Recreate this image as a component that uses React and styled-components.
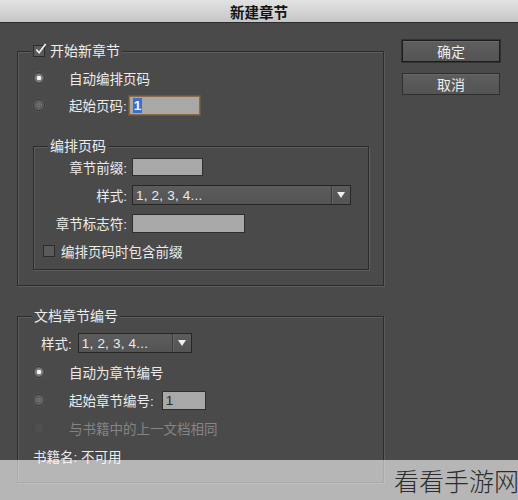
import React from "react";
import styled, { createGlobalStyle } from "styled-components";

const Global = createGlobalStyle`
  html, body { margin: 0; padding: 0; background: #4a4a4a; }
  body { font-family: "Liberation Sans", "Noto Sans CJK SC", sans-serif; }
`;

const Window = styled.div`
  position: relative;
  width: 518px;
  height: 500px;
  background: #4a4a4a;
  overflow: hidden;
  display: flex;
  flex-direction: column;
  color: #ebebeb;
  font-size: 13.5px;
`;

const TitleBar = styled.div`
  height: 22px;
  border-bottom: 1px solid #2c2c2c;
  background: linear-gradient(#e2e2e2, #c6c6c6);
  display: flex;
  align-items: center;
  justify-content: center;
  color: #141414;
  font-size: 14.5px;
  font-weight: 700;
`;

const Body = styled.div`
  display: flex;
  align-items: flex-start;
  padding-left: 17px;
`;

const MainColumn = styled.div`
  width: 367px;
  display: flex;
  flex-direction: column;
`;

const SideColumn = styled.div`
  margin-left: 18px;
  margin-top: 17px;
  display: flex;
  flex-direction: column;
  gap: 11px;
`;

const Button = styled.div`
  width: 96px;
  height: 20px;
  border: 1px solid ${(p) => (p.$primary ? "#1c1c1c" : "#2e2e2e")};
  box-shadow: ${(p) =>
    p.$primary ? "0 0 0 1px #333, inset 0 1px 0 #6a6a6a" : "inset 0 1px 0 #666"};
  background: linear-gradient(#5e5e5e, #545454);
  display: flex;
  align-items: center;
  justify-content: center;
  color: #ececec;
  font-size: 14px;
`;

const GroupBox = styled.div`
  margin-top: ${(p) => p.$top}px;
  margin-left: ${(p) => p.$left || 0}px;
  width: ${(p) => p.$width}px;
  border: 1px solid #2b2b2b;
  box-shadow: inset 1px 1px 0 #5d5d5d, 1px 1px 0 #5d5d5d;
  padding-bottom: ${(p) => p.$bottom}px;
  display: flex;
  flex-direction: column;
  box-sizing: border-box;
`;

const Legend = styled.div`
  align-self: flex-start;
  margin: -8px 0 0 ${(p) => p.$indent}px;
  height: 14px;
  line-height: 14px;
  padding: 0 2px;
  background: #4a4a4a;
  display: flex;
  align-items: center;
  gap: 5px;
  color: #ececec;
  font-size: 14px;
`;

const Row = styled.div`
  height: 20px;
  margin-top: ${(p) => p.$top}px;
  padding-left: ${(p) => p.$pad || 0}px;
  display: flex;
  align-items: center;
  color: ${(p) => (p.$disabled ? "#858585" : "#ebebeb")};
`;

const Radio = styled.span`
  width: 12px;
  height: 12px;
  border-radius: 50%;
  flex: none;
  margin-right: 24px;
  box-sizing: border-box;
  border: 1px solid ${(p) => (p.$disabled ? "#474747" : "#383838")};
  background: ${(p) =>
    p.$checked
      ? "radial-gradient(circle, #f4f4f4 0 2px, #7a7a7a 2.6px 3.6px, #666 4.2px)"
      : p.$disabled
      ? "#4f4f4f"
      : "radial-gradient(circle, #6a6a6a 0 2.5px, #585858 3px 3.6px, #676767 4.2px)"};
  box-shadow: ${(p) => (p.$disabled ? "none" : "0 0 0 1px #545454")};
`;

const Box = styled.span`
  width: 12px;
  height: 12px;
  flex: none;
  box-sizing: border-box;
  border: 1px solid #2c2c2c;
  background: #5a5a5a;
  display: flex;
  align-items: center;
  justify-content: center;
  overflow: visible;
`;

const Label = styled.span`
  width: ${(p) => (p.$width ? `${p.$width}px` : "auto")};
  text-align: ${(p) => (p.$right ? "right" : "left")};
  margin-left: ${(p) => p.$lead || 0}px;
  margin-right: ${(p) => p.$gap || 0}px;
  flex: none;
  white-space: nowrap;
`;

const Field = styled.span`
  width: ${(p) => p.$width}px;
  height: ${(p) => p.$height || 18}px;
  box-sizing: border-box;
  border: 1px solid ${(p) => (p.$focus ? "#8a6a47" : "#2e2e2e")};
  box-shadow: ${(p) => (p.$focus ? "0 0 0 1px #6b5640" : "none")};
  background: #a8a8a8;
  display: flex;
  align-items: center;
  padding-left: 3px;
  color: #2a2a2a;
  font-size: 13.5px;
`;

const Selected = styled.span`
  background: #3c6fcd;
  color: #f4f4f4;
  padding: 0 1px;
  line-height: 15px;
  font-weight: 700;
`;

const Select = styled.span`
  width: ${(p) => p.$width}px;
  height: 20px;
  box-sizing: border-box;
  border: 1px solid #262626;
  background: linear-gradient(#5c5c5c, #545454);
  display: flex;
  align-items: stretch;
  color: #ebebeb;
  font-size: 13.5px;
`;

const SelectText = styled.span`
  flex: 1;
  display: flex;
  align-items: center;
  padding-left: 3px;
  letter-spacing: 0.2px;
`;

const SelectArrow = styled.span`
  width: 18px;
  border-left: 1px solid #3a3a3a;
  box-shadow: inset 1px 0 0 #666;
  display: flex;
  align-items: center;
  justify-content: center;
`;

const Shade = styled.div`
  position: absolute;
  left: 0;
  right: 0;
  bottom: 0;
  height: 40px;
  background: rgba(255, 255, 255, 0.6);
  display: flex;
  justify-content: flex-end;
  align-items: flex-start;
`;

const Mark = styled.span`
  margin-top: 5px;
  margin-right: -1px;
  font-family: "Noto Sans CJK SC", sans-serif;
  font-size: 25px;
  line-height: 30px;
  color: #2c2c2c;
  font-weight: 300;
`;

const Check = () => (
  <svg width="14" height="14" viewBox="0 0 14 14" style={{ margin: "-4px -3px 0 0" }}>
    <path d="M2.5 7.5 L5.5 11 L12.5 1.5" fill="none" stroke="#f2f2f2" strokeWidth="1.8" />
  </svg>
);

const Arrow = () => (
  <svg width="8" height="6" viewBox="0 0 8 6">
    <path d="M0 0 H8 L4 6 Z" fill="#f0f0f0" />
  </svg>
);

const StyleSelect = ({ width }) => (
  <Select $width={width}>
    <SelectText>1, 2, 3, 4...</SelectText>
    <SelectArrow>
      <Arrow />
    </SelectArrow>
  </Select>
);

export default function App() {
  return (
    <Window>
      <Global />
      <TitleBar>新建章节</TitleBar>
      <Body>
        <MainColumn>
          <GroupBox $top={28} $width={367} $bottom={15}>
            <Legend $indent={13}>
              <Box>
                <Check />
              </Box>
              开始新章节
            </Legend>
            <Row $top={10} $pad={15}>
              <Radio $checked />
              <Label>自动编排页码</Label>
            </Row>
            <Row $top={7} $pad={15}>
              <Radio />
              <Label $gap={2}>起始页码:</Label>
              <Field $width={71} $height={19} $focus>
                <Selected>1</Selected>
              </Field>
            </Row>

            <GroupBox $top={31} $left={15} $width={336} $bottom={8}>
              <Legend $indent={14}>编排页码</Legend>
              <Row $top={4}>
                <Label $width={93} $right $gap={5}>章节前缀:</Label>
                <Field $width={71} />
              </Row>
              <Row $top={8}>
                <Label $width={93} $right $gap={5}>样式:</Label>
                <StyleSelect width={219} />
              </Row>
              <Row $top={8}>
                <Label $width={93} $right $gap={5}>章节标志符:</Label>
                <Field $width={113} $height={19} />
              </Row>
              <Row $top={8} $pad={9}>
                <Box />
                <Label $lead={6}>编排页码时包含前缀</Label>
              </Row>
            </GroupBox>
          </GroupBox>

          <GroupBox $top={30} $width={367} $bottom={16}>
            <Legend $indent={14}>文档章节编号</Legend>
            <Row $top={10} $pad={23}>
              <Label $gap={6}>样式:</Label>
              <StyleSelect width={114} />
            </Row>
            <Row $top={9} $pad={15}>
              <Radio $checked />
              <Label>自动为章节编号</Label>
            </Row>
            <Row $top={8} $pad={15}>
              <Radio />
              <Label $gap={8}>起始章节编号:</Label>
              <Field $width={44} $height={19}>1</Field>
            </Row>
            <Row $top={8} $pad={15} $disabled>
              <Radio $disabled />
              <Label>与书籍中的上一文档相同</Label>
            </Row>
            <Row $top={8} $pad={15}>
              <Label>书籍名: 不可用</Label>
            </Row>
          </GroupBox>
        </MainColumn>

        <SideColumn>
          <Button $primary>确定</Button>
          <Button>取消</Button>
        </SideColumn>
      </Body>
      <Shade>
        <Mark>看看手游网</Mark>
      </Shade>
    </Window>
  );
}
